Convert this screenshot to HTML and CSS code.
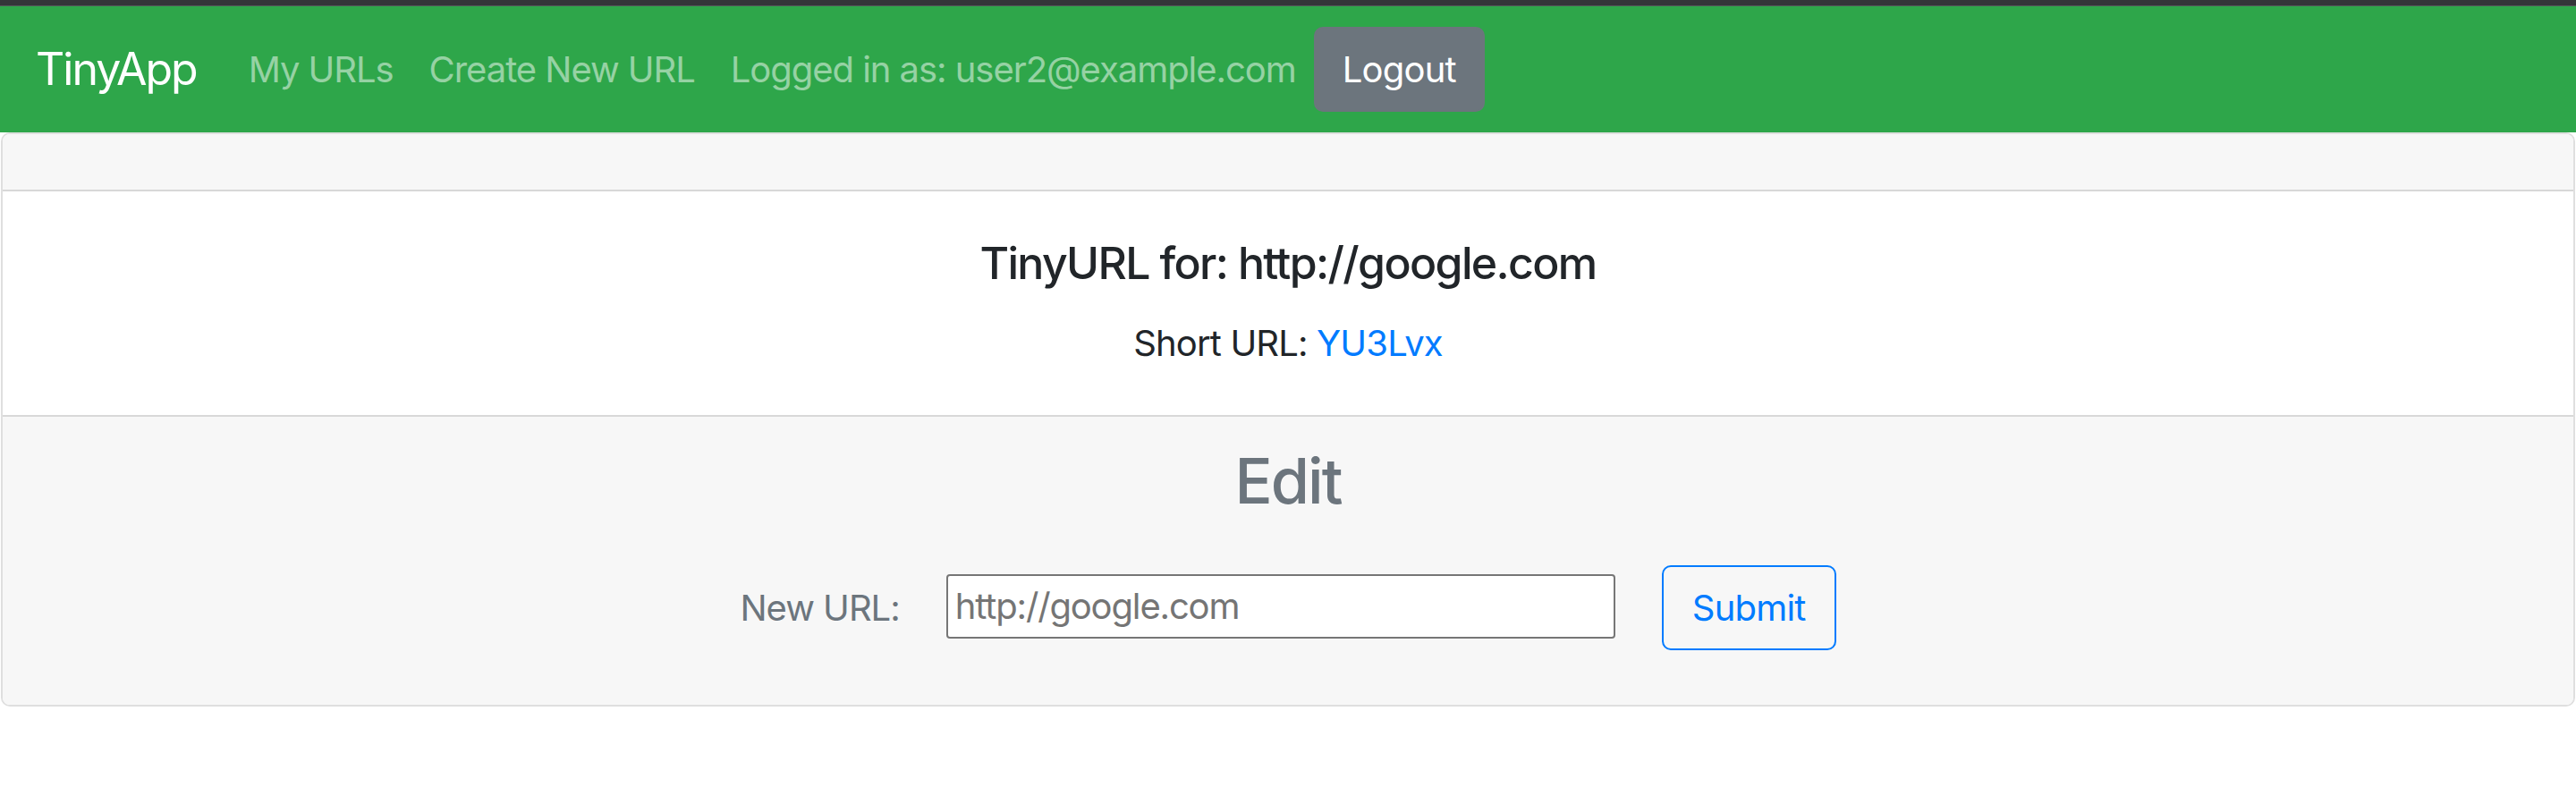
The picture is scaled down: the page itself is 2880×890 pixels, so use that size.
FILE: index.html
```html
<!DOCTYPE html>
<html lang="en">
<head>
<meta charset="utf-8">
<title>TinyApp</title>
<link rel="stylesheet" href="styles.css">
</head>
<body>
<div class="chrome-bar"></div>
<nav class="navbar">
  <a class="brand" href="#">TinyApp</a>
  <a class="nav-link" href="#">My URLs</a>
  <a class="nav-link" href="#">Create New URL</a>
  <span class="nav-link">Logged in as: user2@example.com</span>
  <button class="btn btn-logout" type="button">Logout</button>
</nav>
<main class="card">
  <div class="card-header"></div>
  <div class="card-body">
    <h5 class="card-title">TinyURL for: http://google.com</h5>
    <p class="card-text">Short URL: <a class="short-link" href="#">YU3Lvx</a></p>
  </div>
  <div class="card-footer">
    <h3 class="edit-title">Edit</h3>
    <form class="edit-form">
      <label class="edit-label" for="newurl">New URL:</label>
      <input class="edit-input" id="newurl" type="text" value="http://google.com">
      <button class="btn btn-submit" type="submit">Submit</button>
    </form>
  </div>
</main>
</body>
</html>
```
FILE: styles.css
```css
* { box-sizing: border-box; }
html, body {
  margin: 0;
  padding: 0;
  background: #ffffff;
  font-family: Inter, "Liberation Sans", sans-serif;
  color: #212529;
}
.chrome-bar {
  height: 7px;
  background: #343539;
  border-bottom: 1px solid #55565a;
}
.navbar {
  display: flex;
  align-items: center;
  height: 141px;
  padding: 20px 40px;
  background: #2ea64a;
}
.brand {
  font-size: 50px;
  line-height: 75px;
  color: #ffffff;
  text-decoration: none;
  margin-right: 38px;
  letter-spacing: -2px;
}
.nav-link {
  font-size: 40px;
  line-height: 60px;
  padding: 0 20px;
  color: rgba(255, 255, 255, 0.5);
  text-decoration: none;
  letter-spacing: -1.05px;
}
.btn {
  font-family: inherit;
  font-size: 40px;
  line-height: 60px;
  border-radius: 10px;
  cursor: pointer;
  letter-spacing: -0.8px;
}
.btn-logout {
  height: 95px;
  padding: 0 30px;
  background: #6c757d;
  color: #ffffff;
  border: 2px solid #6c757d;
}
.card {
  display: block;
  margin: 0 1px;
  border: 2px solid rgba(0, 0, 0, 0.125);
  border-radius: 10px;
  overflow: hidden;
}
.card-header {
  height: 64px;
  background: #f7f7f7;
  border-bottom: 2px solid rgba(0, 0, 0, 0.125);
}
.card-body {
  padding: 50px;
  text-align: center;
  background: #ffffff;
}
.card-title {
  margin: 0 0 30px;
  font-size: 50px;
  line-height: 60px;
  font-weight: 500;
  letter-spacing: -1.65px;
}
.card-text {
  margin: 0;
  font-size: 40px;
  line-height: 60px;
  letter-spacing: -0.85px;
}
.short-link {
  color: #007bff;
  text-decoration: none;
}
.card-footer {
  padding: 30px 50px;
  background: #f7f7f7;
  border-top: 2px solid rgba(0, 0, 0, 0.125);
  text-align: center;
}
.edit-title {
  margin: 0 0 20px;
  font-size: 70px;
  line-height: 84px;
  font-weight: 500;
  color: #6c757d;
  letter-spacing: -2px;
}
.edit-form {
  display: flex;
  justify-content: center;
  align-items: center;
  gap: 52px;
  padding: 32px 0 31px;
}
.edit-label {
  font-size: 40px;
  line-height: 60px;
  color: #6c757d;
  letter-spacing: -1px;
}
.edit-input {
  width: 748px;
  height: 72px;
  margin-bottom: 4px;
  padding: 0 8px;
  border: 2px solid #767676;
  border-radius: 4px;
  background: #ffffff;
  font-family: inherit;
  font-size: 40px;
  color: #757575;
  letter-spacing: -1.15px;
}
.btn-submit {
  height: 95px;
  padding: 0 32px;
  background: transparent;
  color: #007bff;
  border: 2.5px solid #007bff;
}
```
